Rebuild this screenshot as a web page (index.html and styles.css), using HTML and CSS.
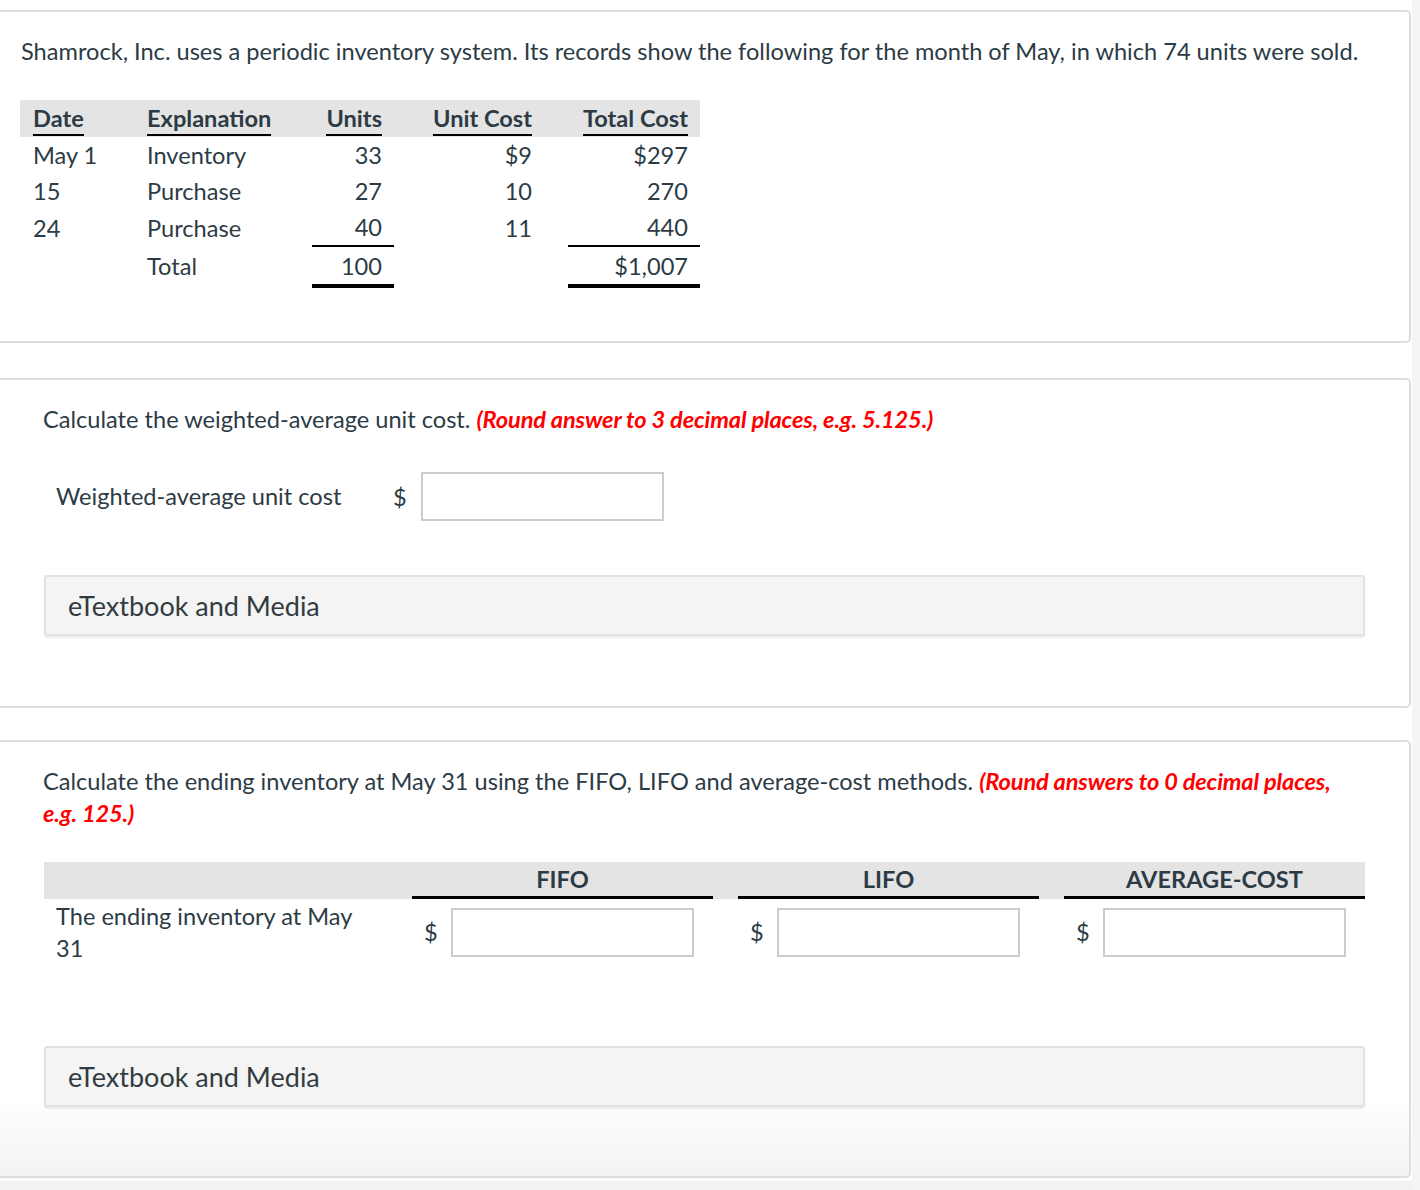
FILE: index.html
```html
<!DOCTYPE html>
<html lang="en">
<head>
<meta charset="utf-8">
<title>Shamrock, Inc. inventory</title>
<link rel="stylesheet" href="styles.css">
</head>
<body>
<div class="page">
  <main class="content">
    <section class="card card-intro">
      <p class="intro">Shamrock, Inc. uses a periodic inventory system. Its records show the following for the month of May, in which 74 units were sold.</p>
      <table class="records">
        <thead>
          <tr>
            <th class="c-date"><span>Date</span></th>
            <th class="c-expl"><span>Explanation</span></th>
            <th class="c-units num"><span>Units</span></th>
            <th class="c-ucost num"><span>Unit Cost</span></th>
            <th class="c-tcost num"><span>Total Cost</span></th>
          </tr>
        </thead>
        <tbody>
          <tr>
            <td class="c-date">May 1</td>
            <td class="c-expl">Inventory</td>
            <td class="c-units num">33</td>
            <td class="c-ucost num">$9</td>
            <td class="c-tcost num">$297</td>
          </tr>
          <tr>
            <td class="c-date">15</td>
            <td class="c-expl">Purchase</td>
            <td class="c-units num">27</td>
            <td class="c-ucost num">10</td>
            <td class="c-tcost num">270</td>
          </tr>
          <tr>
            <td class="c-date">24</td>
            <td class="c-expl">Purchase</td>
            <td class="c-units num">40</td>
            <td class="c-ucost num">11</td>
            <td class="c-tcost num">440</td>
          </tr>
          <tr class="total-row">
            <td class="c-date"></td>
            <td class="c-expl">Total</td>
            <td class="c-units num ruled">100</td>
            <td class="c-ucost num"></td>
            <td class="c-tcost num ruled">$1,007</td>
          </tr>
        </tbody>
      </table>
    </section>

    <section class="card card-q1">
      <p class="question">Calculate the weighted-average unit cost. <em class="hint">(Round answer to 3 decimal places, e.g. 5.125.)</em></p>
      <div class="answer-row">
        <span class="answer-label">Weighted-average unit cost</span>
        <span class="dollar">$</span>
        <input class="answer-input" type="text" aria-label="Weighted-average unit cost">
      </div>
      <div class="media-box">eTextbook and Media</div>
    </section>

    <section class="card card-q2">
      <p class="question">Calculate the ending inventory at May 31 using the FIFO, LIFO and average-cost methods. <em class="hint">(Round answers to 0 decimal places, e.g. 125.)</em></p>
      <div class="grid-table">
        <div class="gt-head">
          <div class="gt-blank"></div>
          <div class="gt-col-head">FIFO</div>
          <div class="gt-gap"></div>
          <div class="gt-col-head">LIFO</div>
          <div class="gt-gap"></div>
          <div class="gt-col-head">AVERAGE-COST</div>
        </div>
        <div class="gt-row">
          <div class="gt-label">The ending inventory at May 31</div>
          <div class="gt-cell"><span class="dollar">$</span><input class="answer-input" type="text" aria-label="FIFO"></div>
          <div class="gt-gap"></div>
          <div class="gt-cell"><span class="dollar">$</span><input class="answer-input" type="text" aria-label="LIFO"></div>
          <div class="gt-gap"></div>
          <div class="gt-cell"><span class="dollar">$</span><input class="answer-input" type="text" aria-label="Average-cost"></div>
        </div>
      </div>
      <div class="media-box media-box-2">eTextbook and Media</div>
    </section>
    <div class="footer-band"></div>
  </main>
  <div class="side-strip"></div>
</div>
</body>
</html>
```

FILE: styles.css
```css
* { box-sizing: border-box; }

html, body {
  margin: 0;
  padding: 0;
  background: #ffffff;
}

body {
  font-family: Lato, "Open Sans", "Liberation Sans", sans-serif;
  color: #2d3b45;
  font-size: 23.6px;
}

.page {
  display: flex;
  width: 1420px;
  min-height: 1190px;
}

.content {
  width: 1412px;
  padding-top: 10px;
  display: flex;
  flex-direction: column;
  background: #ffffff;
}

.side-strip {
  flex: 1;
  background: #f5f5f5;
}

.card {
  border: 2px solid #dddddd;
  border-left: none;
  border-radius: 0 5px 5px 0;
  background: #ffffff;
  width: 1411px;
}

/* ---------- intro card ---------- */
.card-intro {
  height: 333px;
  padding: 25px 0 0 21px;
}

.intro {
  margin: 0;
  line-height: 28px;
}

.records {
  border-collapse: collapse;
  margin-top: 35px;
  margin-left: -1px;
  font-size: 23.6px;
}

.records th,
.records td {
  padding: 0 12px 0 13px;
  text-align: left;
  font-weight: normal;
  white-space: nowrap;
}

.records thead tr {
  background: #e4e4e4;
}

.records th {
  height: 37px;
  font-weight: 700;
  vertical-align: bottom;
  padding-bottom: 1px;
}

.records th span {
  display: inline-block;
  line-height: 31px;
  border-bottom: 2px solid #000;
}

.records td {
  height: 36px;
  line-height: 36px;
}

.records .num { text-align: right; }

.c-date  { width: 115px; }
.records .c-expl  { width: 177px; padding-left: 12px; }
.c-units { width: 82px; }
.records .c-ucost { width: 174px; padding-right: 36px; }
.c-tcost { width: 132px; }

.total-row td { height: 40px; line-height: 36px; }

.total-row td.ruled {
  border-top: 2px solid #000;
  border-bottom: 4px solid #000;
}

/* ---------- question cards ---------- */
.card-q1 {
  margin-top: 35px;
  height: 330px;
  padding: 23px 0 0 43px;
}

.question {
  margin: 0;
  line-height: 32px;
  width: 1310px;
}

.hint {
  color: #ff0000;
  font-weight: 700;
  font-style: italic;
  letter-spacing: -0.15px;
}

.answer-row {
  display: flex;
  align-items: center;
  margin-top: 39px;
  padding-left: 13px;
}

.answer-label {
  width: 337px;
  line-height: 28px;
  margin-top: -4px;
}

.dollar {
  line-height: 28px;
}

.answer-row .dollar {
  margin-top: -2px;
}

.answer-input {
  display: block;
  width: 243px;
  height: 49px;
  border: 2px solid #cccccc;
  background: #ffffff;
  margin: 0;
  padding: 0 8px;
  font: inherit;
  outline: none;
  border-radius: 0;
}

.answer-row .answer-input {
  margin-left: 14px;
  margin-top: -2px;
}

.media-box {
  margin-top: 54px;
  margin-left: 1px;
  width: 1321px;
  height: 61px;
  background: #f4f4f4;
  border: 2px solid #e2e2e2;
  border-radius: 3px;
  box-shadow: 0 2px 2px rgba(0, 0, 0, 0.08);
  padding: 0 0 0 22px;
  display: flex;
  align-items: center;
  font-size: 27px;
  color: #333b40;
}

/* ---------- second question ---------- */
.card-q2 {
  margin-top: 32px;
  height: 438px;
  padding: 23px 0 0 43px;
  background: linear-gradient(to bottom, #ffffff 0%, #ffffff 82%, #f3f3f3 100%);
}

.grid-table {
  margin-top: 33px;
  margin-left: 1px;
  width: 1321px;
}

.gt-head,
.gt-row {
  display: grid;
  grid-template-columns: 368px 301px 25px 301px 25px 301px;
}

.gt-head {
  background: #e4e4e4;
  height: 37px;
}

.gt-col-head {
  font-weight: 700;
  text-align: center;
  line-height: 35px;
  border-bottom: 3px solid #000;
  height: 37px;
}

.gt-label {
  padding: 1px 40px 0 12px;
  line-height: 32px;
}

.gt-cell {
  display: flex;
  align-items: center;
  align-self: start;
  margin-top: 9px;
  padding-left: 12px;
}

.gt-cell .dollar {
  width: 27px;
  margin-top: -2px;
}

.media-box-2 {
  margin-top: 82px;
}

.footer-band {
  flex: 1;
  background: #f2f2f2;
  margin-top: 3px;
}
```
